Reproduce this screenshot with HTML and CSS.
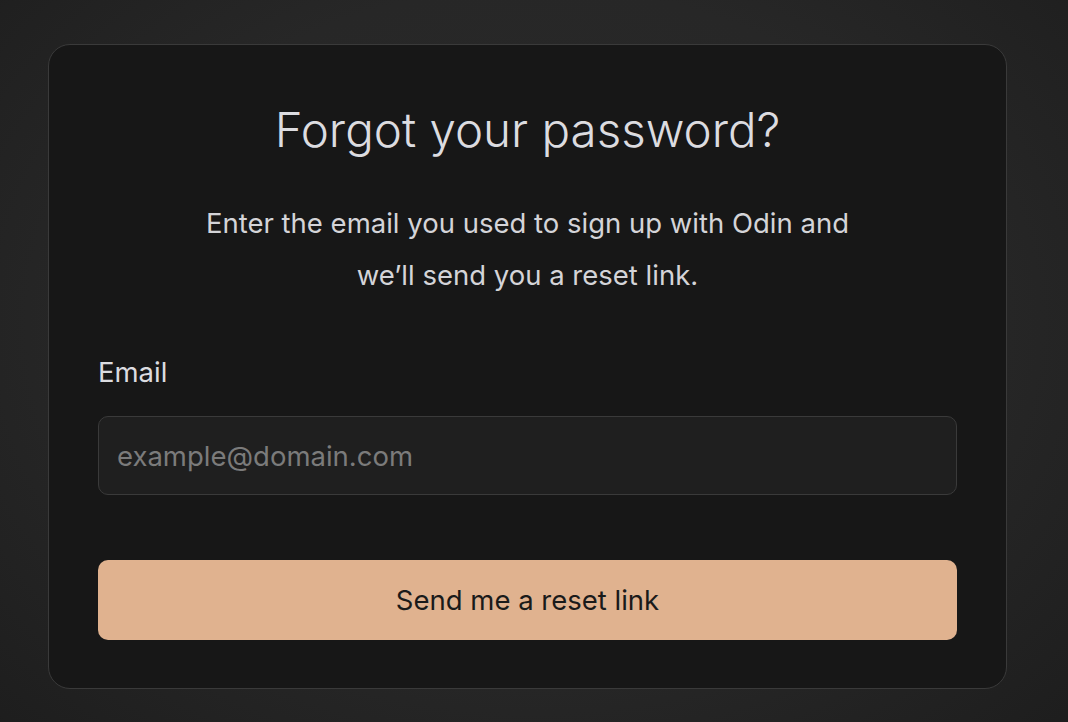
FILE: index.html
```html
<!DOCTYPE html>
<html>
<head>
  <title>Forgot your password?</title>
  <link rel="stylesheet" href="styles.css">
</head>
<body>
  <div class="reset-card">
    <h1>Forgot your password?</h1>
    <p class="reset-intro">Enter the email you used to sign up with Odin and<br>we’ll send you a reset link.</p>

    <form class="reset-form" onsubmit="return false">
      <label for="email">Email</label>
      <input id="email" type="email" placeholder="example@domain.com">
      <button type="submit">Send me a reset link</button>
    </form>
  </div>
</body>
</html>
```

FILE: styles.css
```css
html {
  background-color: #222222;
}
body {
  margin: 0;
  min-height: 722px;
  padding: 44px 0 0 48px;
  box-sizing: border-box;
  font-family: 'Inter', 'Noto Sans', sans-serif;
  background: radial-gradient(ellipse 75% 85% at 50% 45%, #2b2b2b 0%, #272727 55%, #1c1c1c 100%);
  color: #d8d8dc;
}
.reset-card {
  width: 959px;
  box-sizing: border-box;
  padding: 57px 49px 48px;
  background-color: #171717;
  border: 1px solid #3a3a3a;
  border-radius: 22px;
}
h1 {
  margin: 0;
  font-size: 47.5px;
  line-height: 56px;
  font-weight: 300;
  text-align: center;
  color: #dcdce0;
}
.reset-intro {
  margin: 39px 0 0;
  font-size: 27.5px;
  line-height: 52px;
  text-align: center;
  color: #d4d4d8;
}
.reset-form {
  display: flex;
  flex-direction: column;
}
label {
  margin-top: 55px;
  font-size: 27.5px;
  line-height: 32px;
  color: #dcdce0;
}
input {
  margin-top: 28px;
  height: 79px;
  box-sizing: border-box;
  padding: 0 18px;
  background-color: #1f1f1f;
  border: 1px solid #3a3a3a;
  border-radius: 10px;
  font-family: inherit;
  font-size: 27.5px;
  color: #d8d8dc;
  outline: none;
}
input::placeholder {
  color: #7b7b7b;
}
button {
  margin-top: 65px;
  height: 80px;
  background-color: #e0b28f;
  border: none;
  border-radius: 10px;
  font-family: inherit;
  font-size: 27.5px;
  color: #1a1a1a;
  cursor: pointer;
}
```
